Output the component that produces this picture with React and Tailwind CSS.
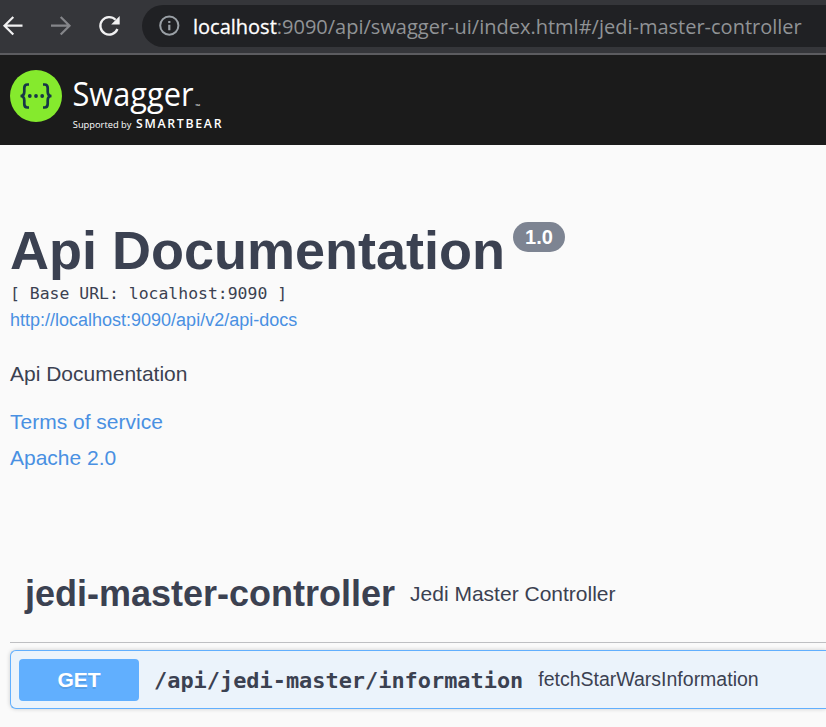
function BrowserBar() {
  return (
    <div className="flex h-[55px] items-start border-b-2 border-[#5c5c60] bg-[#35363a]">
      <svg className="h-[53px] w-[142px] shrink-0" viewBox="0 0 142 53" fill="none">
        <path d="M22.5 25.7H4.5M13.3 17L4.5 25.7L13.3 34.5" stroke="#f1f1f2" strokeWidth="2.2" />
        <path d="M51 25.7H69M60.7 17L69.5 25.7L60.7 34.5" stroke="#85868a" strokeWidth="2.2" />
        <path d="M115.6 19.8A8.8 8.8 0 1 0 117.4 29" stroke="#f1f1f2" strokeWidth="2.3" />
        <path d="M119.7 16V24.5H111.2Z" fill="#f1f1f2" />
      </svg>
      <div className="mt-[5px] flex h-[42px] flex-1 items-center rounded-l-full bg-[#202124] pl-4">
        <svg className="h-[22px] w-[22px] shrink-0" viewBox="0 0 22 22" fill="none">
          <circle cx="11.3" cy="10.6" r="9.1" stroke="#9aa0a6" strokeWidth="2" />
          <path d="M11.3 9.7V15.3M11.3 6V8.1" stroke="#9aa0a6" strokeWidth="2.2" />
        </svg>
        <div className="ml-[13px] whitespace-nowrap font-['Open_Sans','Noto_Sans',sans-serif] text-[20px] leading-[43px] text-[#909396]">
          <span className="text-white [-webkit-text-stroke:0.3px_white]">localhost</span>
          <span>:9090/api/swagger-ui/index.html#/jedi-master-controller</span>
        </div>
      </div>
    </div>
  );
}

function SwaggerLogo() {
  return (
    <svg className="h-[90px] w-[240px]" viewBox="0 0 240 90" fill="none">
      <circle cx="36" cy="41" r="26" fill="#85ea2d" />
      <g stroke="#173647" strokeWidth="2.7">
        <path d="M29 29.5H27.5Q24.3 29.5 24.3 33V36.5Q24.3 41 20.5 41Q24.3 41 24.3 45.5V49Q24.3 52.5 27.5 52.5H29" />
        <path d="M43 29.5H44.5Q47.7 29.5 47.7 33V36.5Q47.7 41 51.5 41Q47.7 41 47.7 45.5V49Q47.7 52.5 44.5 52.5H43" />
      </g>
      <g fill="#173647">
        <circle cx="29.8" cy="41" r="1.9" />
        <circle cx="36" cy="41" r="1.9" />
        <circle cx="42.2" cy="41" r="1.9" />
      </g>
      <g fill="#ffffff" className="font-['Open_Sans','Noto_Sans',sans-serif]">
        <text x="72.5" y="51" fontSize="33" textLength="121" lengthAdjust="spacingAndGlyphs">Swagger</text>
        <text x="195.3" y="52.5" fontSize="5" textLength="5" lengthAdjust="spacingAndGlyphs">™</text>
        <text x="72.8" y="73" fontSize="9.3" textLength="58.7" lengthAdjust="spacing">Supported by</text>
        <text x="136" y="72.5" fontSize="12.3" fontWeight="600" textLength="85.5" lengthAdjust="spacing">SMARTBEAR</text>
      </g>
    </svg>
  );
}

function Info() {
  return (
    <section className="flex flex-col pl-2.5 pt-[75px]">
      <div className="flex h-[62px] items-start gap-2">
        <h1 className="whitespace-nowrap text-[54px] font-bold leading-[60px]">Api Documentation</h1>
        <span className="mt-[2px] h-[30px] w-[52px] rounded-full bg-[#7d8492] text-center text-[20px] font-bold leading-[30px] text-white">1.0</span>
      </div>
      <pre className="h-[22px] font-['DejaVu_Sans_Mono',monospace] text-[16.44px] leading-[24px]">[ Base URL: localhost:9090 ]</pre>
      <a className="text-[18px] leading-8 text-[#4990e2]">http://localhost:9090/api/v2/api-docs</a>
      <p className="mt-5 text-[21px] leading-9">Api Documentation</p>
      <a className="mt-3 text-[21px] leading-9 text-[#4990e2]">Terms of service</a>
      <a className="text-[21px] leading-9 text-[#4990e2]">Apache 2.0</a>
    </section>
  );
}

function Operations() {
  return (
    <section className="mt-[70px] pl-2.5">
      <div className="flex h-[97px] items-center gap-[15px] whitespace-nowrap border-b border-[#bebfc2] pl-[15px]">
        <h2 className="text-[36px] font-bold leading-[96px]">jedi-master-controller</h2>
        <span className="text-[21px] leading-[96px]">Jedi Master Controller</span>
      </div>
      <div className="mt-[7px] flex h-[59px] items-center whitespace-nowrap rounded-l-md border border-r-0 border-[#61affe] bg-[#ebf3fb] pl-2 shadow-[0_0_4px_rgba(0,0,0,0.19)]">
        <span className="h-[42px] w-[120px] rounded-[4px] bg-[#61affe] text-center text-[21px] font-bold leading-[42px] text-white [text-shadow:0_1.5px_0_rgba(0,0,0,0.1)]">GET</span>
        <span className="ml-[15px] pt-[3px] font-['DejaVu_Sans_Mono',monospace] text-[21.92px] font-bold">/api/jedi-master/information</span>
        <span className="ml-[15px] text-[19.5px]">fetchStarWarsInformation</span>
      </div>
    </section>
  );
}

export default function App() {
  return (
    <div className="h-[727px] w-[826px] overflow-hidden bg-[#fafafa] font-['Liberation_Sans',Arial,sans-serif] text-[#3b4151]">
      <BrowserBar />
      <header className="h-[90px] bg-[#1b1b1b]">
        <SwaggerLogo />
      </header>
      <Info />
      <Operations />
    </div>
  );
}
